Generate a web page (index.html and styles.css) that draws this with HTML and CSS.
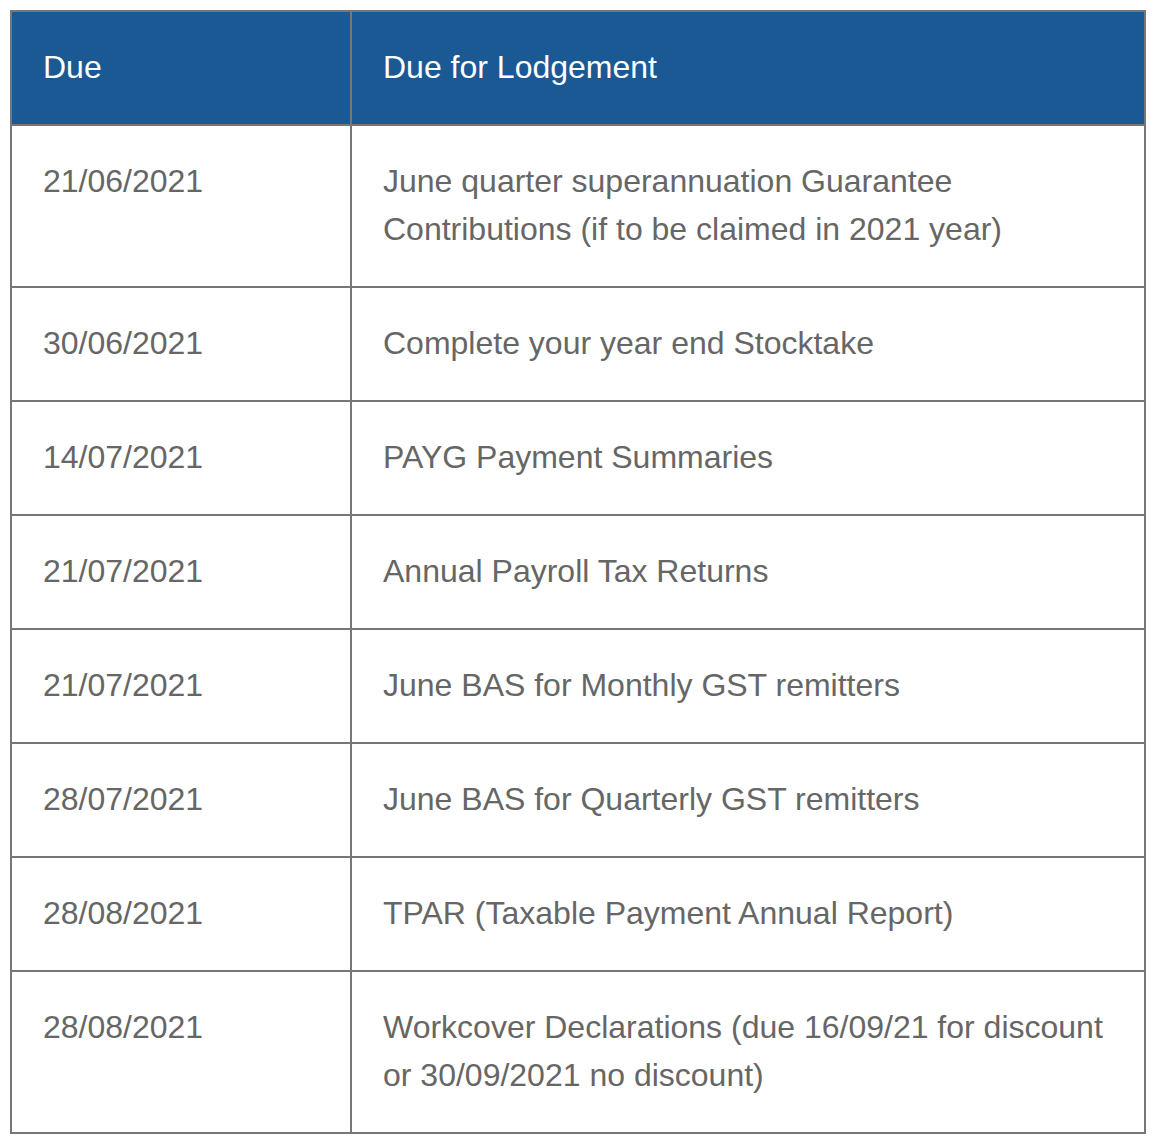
FILE: index.html
```html
<!DOCTYPE html>
<html>
<head>
<meta charset="utf-8">
<link rel="stylesheet" href="styles.css">
</head>
<body>
<div class="wrap">
<table class="due-table">
  <colgroup><col class="c1"><col class="c2"></colgroup>
  <thead>
    <tr><th>Due</th><th>Due for Lodgement</th></tr>
  </thead>
  <tbody>
    <tr><td>21/06/2021</td><td>June quarter superannuation Guarantee Contributions (if to be claimed in 2021 year)</td></tr>
    <tr><td>30/06/2021</td><td>Complete your year end Stocktake</td></tr>
    <tr><td>14/07/2021</td><td>PAYG Payment Summaries</td></tr>
    <tr><td>21/07/2021</td><td>Annual Payroll Tax Returns</td></tr>
    <tr><td>21/07/2021</td><td>June BAS for Monthly GST remitters</td></tr>
    <tr><td>28/07/2021</td><td>June BAS for Quarterly GST remitters</td></tr>
    <tr><td>28/08/2021</td><td>TPAR (Taxable Payment Annual Report)</td></tr>
    <tr><td>28/08/2021</td><td>Workcover Declarations (due 16/09/21 for discount or 30/09/2021 no discount)</td></tr>
  </tbody>
</table>
</div>
</body>
</html>
```
FILE: styles.css
```css
html, body {
  margin: 0;
  padding: 0;
  background: #fff;
}
.wrap {
  padding: 10px;
}
.due-table {
  width: 1136px;
  border-collapse: collapse;
  table-layout: fixed;
  font-family: "Liberation Sans", Arial, Helvetica, sans-serif;
  font-size: 32px;
  line-height: 48px;
  color: #666;
  border: 2px solid #777;
}
.c1 { width: 340px; }
.due-table th,
.due-table td {
  border: 2px solid #777;
  padding: 31px 31px 33px 31px;
  text-align: left;
  vertical-align: top;
  font-weight: normal;
}
.due-table th {
  background: #1a5994;
  color: #fff;
}
```
